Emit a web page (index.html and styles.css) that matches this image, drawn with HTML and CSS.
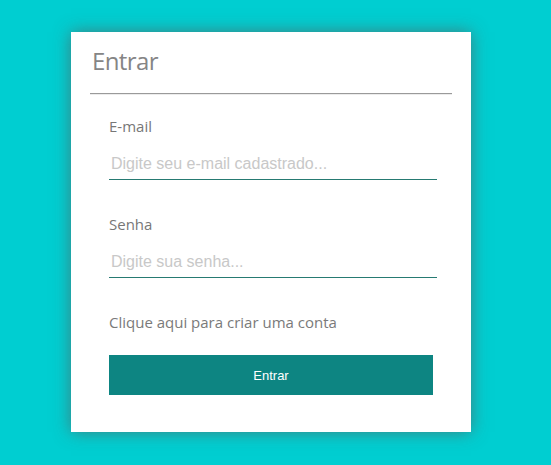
FILE: index.html
```html
<!DOCTYPE html>
<html lang="pt-BR">
<head>
<meta charset="utf-8">
<title>Entrar</title>
<link rel="stylesheet" href="styles.css">
</head>
<body>
<div class="card">
  <h1 class="title">Entrar</h1>
  <hr class="divider">
  <form class="form">
    <label class="label" for="email">E-mail</label>
    <input class="input" id="email" type="text" placeholder="Digite seu e-mail cadastrado...">
    <label class="label label-second" for="senha">Senha</label>
    <input class="input" id="senha" type="password" placeholder="Digite sua senha...">
    <a class="link" href="#">Clique aqui para criar uma conta</a>
    <button class="button" type="button">Entrar</button>
  </form>
</div>
</body>
</html>
```

FILE: styles.css
```css
html, body {
  margin: 0;
  padding: 0;
}
body {
  background: #00ced1;
  width: 551px;
  height: 465px;
  overflow: hidden;
  font-family: "Open Sans", "Noto Sans", sans-serif;
}
.card {
  box-sizing: border-box;
  margin: 32px 0 0 71px;
  width: 400px;
  height: 400px;
  background: #fff;
  padding: 13px 19px 0 19px;
  box-shadow: 0 0 16px rgba(90, 90, 90, 0.7);
}
.title {
  margin: 0 0 0 2px;
  font-weight: 400;
  font-size: 24px;
  line-height: 32px;
  letter-spacing: -0.6px;
  color: #858585;
}
.divider {
  margin: 16px 0 0 0;
  border: 0;
  border-top: 1px solid #9a9a9a;
  border-bottom: 1px solid #ececec;
}
.form {
  display: flex;
  flex-direction: column;
  align-items: flex-start;
  padding: 21px 0 0 19px;
}
.label {
  font-size: 15px;
  line-height: 20px;
  color: #777;
}
.label-second {
  margin-top: 34px;
}
.input {
  box-sizing: border-box;
  width: 328px;
  height: 40px;
  margin-top: 4px;
  padding: 8px 2px 0 2px;
  border: 0;
  border-bottom: 1px solid #267a72;
  outline: none;
  font-family: "Liberation Sans", Arial, sans-serif;
  font-size: 16px;
  color: #555;
  background: transparent;
}
.input::placeholder {
  color: #c8c8c8;
}
.link {
  margin-top: 34px;
  font-size: 15px;
  line-height: 20px;
  color: #7a7a7a;
  text-decoration: none;
}
.button {
  margin-top: 23px;
  width: 324px;
  height: 40px;
  border: 0;
  background: #0d8582;
  color: #fff;
  font-family: "Liberation Sans", Arial, sans-serif;
  font-size: 13px;
  cursor: pointer;
}
```
